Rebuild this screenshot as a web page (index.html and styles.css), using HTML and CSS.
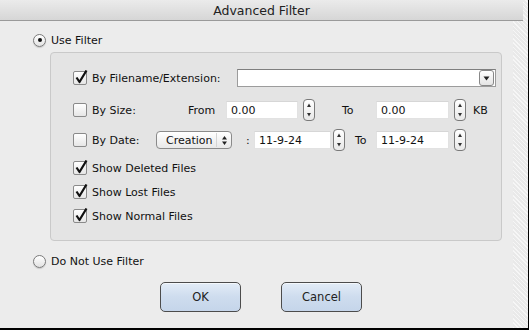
FILE: index.html
```html
<!DOCTYPE html>
<html>
<head>
<meta charset="utf-8">
<link rel="stylesheet" href="styles.css">
</head>
<body>
<div class="screen">
  <div class="window">
    <div class="titlebar">Advanced Filter</div>
    <div class="content">
      <div class="radio-row top-radio">
        <span class="radio checked"><span class="dot"></span></span>
        <span>Use Filter</span>
      </div>
      <div class="group">
        <div class="row r1">
          <span class="check on"><svg viewBox="0 0 14 14" width="14" height="14"><path d="M2.5 7.5 L5.5 12 L12.5 0.5" fill="none" stroke="#111" stroke-width="2.2" stroke-linejoin="round"/></svg></span>
          <span class="lbl lbl-file">By Filename/Extension:</span>
          <div class="combo">
            <span class="combo-btn"><svg viewBox="0 0 7 5" width="7" height="5"><path d="M0.5 0.5 L6.5 0.5 L3.5 4.5 Z" fill="#222"/></svg></span>
          </div>
        </div>
        <div class="row r2">
          <span class="check"></span>
          <span class="lbl lbl-size">By Size:</span>
          <span class="lbl lbl-from">From</span>
          <span class="field f-from">0.00</span>
          <span class="spin"><svg viewBox="0 0 12 22" width="12" height="22"><path d="M4 8 L6 4.5 L8 8 Z M4 14 L6 17.5 L8 14 Z" fill="#333"/></svg></span>
          <span class="lbl lbl-to1">To</span>
          <span class="field f-to">0.00</span>
          <span class="spin"><svg viewBox="0 0 12 22" width="12" height="22"><path d="M4 8 L6 4.5 L8 8 Z M4 14 L6 17.5 L8 14 Z" fill="#333"/></svg></span>
          <span class="lbl lbl-kb">KB</span>
        </div>
        <div class="row r3">
          <span class="check"></span>
          <span class="lbl lbl-date">By Date:</span>
          <span class="popup"><span class="popup-text">Creation</span><span class="popup-arrows"><svg viewBox="0 0 7 11" width="7" height="11"><path d="M1 4.5 L3.5 1 L6 4.5 Z M1 6.5 L3.5 10 L6 6.5 Z" fill="#222"/></svg></span></span>
          <span class="lbl lbl-colon">:</span>
          <span class="field f-date1">11-9-24</span>
          <span class="spin"><svg viewBox="0 0 12 22" width="12" height="22"><path d="M4 8 L6 4.5 L8 8 Z M4 14 L6 17.5 L8 14 Z" fill="#333"/></svg></span>
          <span class="lbl lbl-to2">To</span>
          <span class="field f-date2">11-9-24</span>
          <span class="spin"><svg viewBox="0 0 12 22" width="12" height="22"><path d="M4 8 L6 4.5 L8 8 Z M4 14 L6 17.5 L8 14 Z" fill="#333"/></svg></span>
        </div>
        <div class="row r4">
          <span class="check on"><svg viewBox="0 0 14 14" width="14" height="14"><path d="M2.5 7.5 L5.5 12 L12.5 0.5" fill="none" stroke="#111" stroke-width="2.2" stroke-linejoin="round"/></svg></span>
          <span class="lbl">Show Deleted Files</span>
        </div>
        <div class="row r5">
          <span class="check on"><svg viewBox="0 0 14 14" width="14" height="14"><path d="M2.5 7.5 L5.5 12 L12.5 0.5" fill="none" stroke="#111" stroke-width="2.2" stroke-linejoin="round"/></svg></span>
          <span class="lbl">Show Lost Files</span>
        </div>
        <div class="row r6">
          <span class="check on"><svg viewBox="0 0 14 14" width="14" height="14"><path d="M2.5 7.5 L5.5 12 L12.5 0.5" fill="none" stroke="#111" stroke-width="2.2" stroke-linejoin="round"/></svg></span>
          <span class="lbl">Show Normal Files</span>
        </div>
      </div>
      <div class="radio-row bottom-radio">
        <span class="radio"></span>
        <span>Do Not Use Filter</span>
      </div>
      <div class="buttons">
        <button class="btn">OK</button>
        <button class="btn">Cancel</button>
      </div>
    </div>
  </div>
  <div class="edge"></div>
</div>
</body>
</html>
```
FILE: styles.css
```css
html, body {
  margin: 0;
  padding: 0;
  background: #000;
}
body {
  width: 529px;
  height: 330px;
  overflow: hidden;
  font-family: "DejaVu Sans", "Liberation Sans", sans-serif;
  font-size: 11px;
  color: #111;
}
.screen {
  width: 528px;
  height: 328px;
  display: flex;
  background-color: #f1f1f1;
  background-image: repeating-linear-gradient(45deg, #f6f6f6 0 1px, #e9e9e9 1px 3px);
}
.window {
  width: 513px;
  display: flex;
  flex-direction: column;
  background: #ececec;
}
.edge {
  flex: 1;
}
.titlebar {
  width: 523px;
  height: 21px;
  box-sizing: border-box;
  border-bottom: 1px solid #9a9a9a;
  background: linear-gradient(#ebebeb, #d6d6d6);
  text-align: center;
  font-size: 12.5px;
  line-height: 21px;
  color: #222;
}
.content {
  flex: 1;
  display: flex;
  flex-direction: column;
  padding-left: 33px;
}
.radio-row {
  display: flex;
  align-items: center;
  height: 14px;
  gap: 5px;
}
.top-radio {
  margin-top: 12px;
}
.radio {
  width: 11px;
  height: 11px;
  border: 1px solid #7a7a7a;
  border-radius: 50%;
  background: linear-gradient(#ffffff, #e2e2e2);
  display: flex;
  align-items: center;
  justify-content: center;
  box-shadow: 0 1px 1px rgba(0,0,0,0.15);
}
.dot {
  width: 4px;
  height: 4px;
  border-radius: 50%;
  background: #111;
}
.group {
  margin-top: 5px;
  margin-left: 17px;
  width: 452px;
  height: 189px;
  box-sizing: border-box;
  border: 1px solid #c9c9c9;
  border-radius: 4px;
  background: #e4e4e4;
  padding: 15px 0 0 22px;
  display: flex;
  flex-direction: column;
}
.row {
  display: flex;
  align-items: center;
  height: 20px;
}
.r2 { height: 22px; margin-top: 11px; }
.r3 { height: 22px; margin-top: 8px; }
.r4 { margin-top: 7px; }
.r5 { margin-top: 4px; }
.r6 { margin-top: 4px; }
.check {
  width: 12px;
  height: 12px;
  border: 1px solid #8a8a8a;
  border-radius: 2px;
  background: linear-gradient(#ffffff, #e6e6e6);
  margin-right: 5px;
  position: relative;
  flex: none;
}
.check svg {
  position: absolute;
  left: 0;
  top: -2px;
}
.lbl {
  white-space: nowrap;
}
.lbl-file { width: 145px; }
.lbl-size { width: 96px; }
.lbl-from { width: 38px; }
.lbl-to1 { margin-left: 27px; width: 34px; }
.lbl-kb { margin-left: 7px; }
.lbl-date { width: 64px; }
.lbl-colon { margin-left: 14px; width: 8px; }
.lbl-to2 { margin-left: 10px; width: 21px; }
.combo {
  width: 259px;
  height: 18px;
  box-sizing: border-box;
  background: #fff;
  border: 1px solid #9c9c9c;
  border-top-color: #7e7e7e;
  display: flex;
  justify-content: flex-end;
  align-items: center;
}
.combo-btn {
  width: 13px;
  height: 14px;
  margin-right: 1px;
  border: 1px solid #888;
  border-radius: 3px;
  background: linear-gradient(#ffffff, #e4e4e4);
  display: flex;
  align-items: center;
  justify-content: center;
}
.field {
  height: 18px;
  line-height: 18px;
  box-sizing: border-box;
  padding-left: 4px;
  background: #fff;
  border: 1px solid #e2e2e2;
  border-top-color: #d6d6d6;
}
.f-from { width: 72px; }
.f-to { width: 73px; }
.f-date1 { width: 77px; }
.f-date2 { width: 73px; }
.spin {
  width: 12px;
  height: 22px;
  box-sizing: border-box;
  border: 1px solid #7a7a7a;
  border-radius: 4px;
  background: linear-gradient(#ffffff, #e8e8e8);
  margin-left: 5px;
  display: flex;
  align-items: center;
  justify-content: center;
  overflow: hidden;
}
.spin svg { flex: none; }
.r3 .f-date1 + .spin { margin-left: 2px; }
.popup {
  width: 76px;
  height: 18px;
  box-sizing: border-box;
  border: 1px solid #8a8a8a;
  border-radius: 4px;
  background: linear-gradient(#ffffff, #e8e8e8);
  display: flex;
  align-items: center;
  padding-left: 9px;
}
.popup-text {
  flex: 1;
  font-size: 11px;
}
.popup-arrows {
  width: 14px;
  height: 14px;
  border-left: 1px solid #d4d4d4;
  display: flex;
  align-items: center;
  justify-content: center;
}
.bottom-radio {
  margin-top: 13px;
}
.buttons {
  display: flex;
  gap: 40px;
  margin-top: 14px;
  margin-left: 127px;
}
.btn {
  width: 81px;
  height: 30px;
  box-sizing: border-box;
  border: 1px solid #4c4c4c;
  border-radius: 5px;
  background: linear-gradient(#e3ecf7, #cedcee 50%, #c5d5ea);
  font-family: "DejaVu Sans", "Liberation Sans", sans-serif;
  font-size: 11.5px;
  color: #222;
  padding: 0;
  box-shadow: inset 0 1px 0 #f4f8fc;
}
```
